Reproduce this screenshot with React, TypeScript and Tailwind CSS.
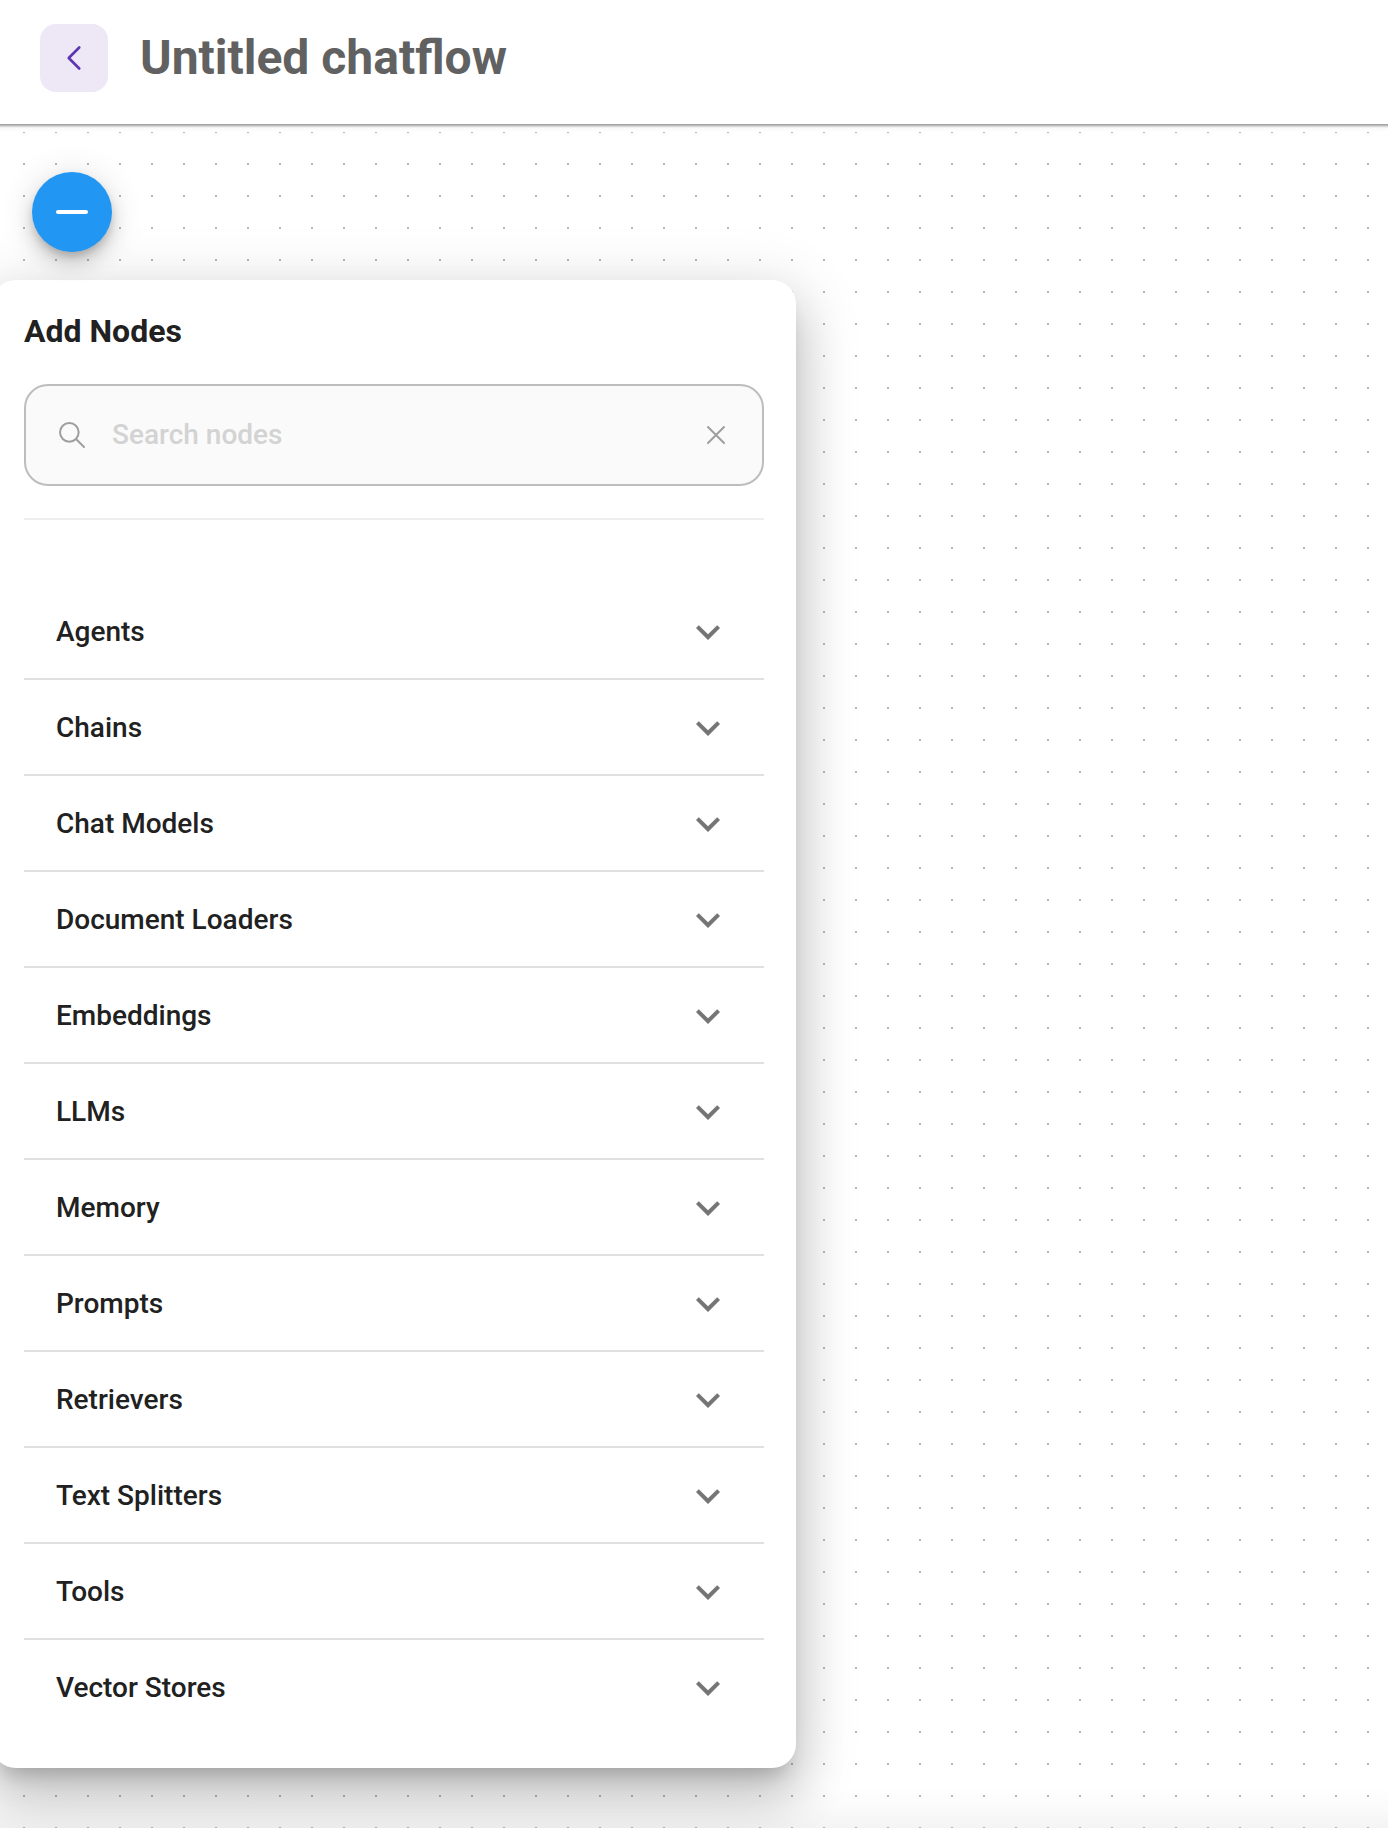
import React from "react";

const categories = [
  "Agents",
  "Chains",
  "Chat Models",
  "Document Loaders",
  "Embeddings",
  "LLMs",
  "Memory",
  "Prompts",
  "Retrievers",
  "Text Splitters",
  "Tools",
  "Vector Stores",
];

type IconProps = { className?: string; children: React.ReactNode };

function Icon({ className, children }: IconProps) {
  return (
    <svg
      viewBox="0 0 24 24"
      fill="none"
      stroke="currentColor"
      strokeWidth={1.5}
      strokeLinecap="round"
      strokeLinejoin="round"
      className={className}
    >
      {children}
    </svg>
  );
}

function Header() {
  return (
    <header className="relative z-10 -mx-4 flex h-[124px] items-start bg-white pt-6 pl-14 shadow-[0_4px_2px_-2px_rgba(0,0,0,0.2),0_2px_2px_0_rgba(0,0,0,0.14),0_2px_6px_0_rgba(0,0,0,0.12)]">
      <button className="flex size-[68px] items-center justify-center rounded-2xl bg-[#ede7f6] text-[#5e35b1]">
        <Icon className="size-[42px]">
          <path d="M15 6l-6 6l6 6" />
        </Icon>
      </button>
      <h1 className="ml-8 text-[48px] leading-[68px] font-bold text-[#616161]">Untitled chatflow</h1>
    </header>
  );
}

function SearchBox() {
  return (
    <div className="flex h-[102px] items-center rounded-3xl border-2 border-[#bdbdbd] bg-[#fafafa] px-[30px]">
      <Icon className="size-8 text-[#9e9e9e]">
        <circle cx="10" cy="10" r="7" />
        <path d="M21 21l-6-6" />
      </Icon>
      <span className="ml-6 flex-1 text-[28px] font-medium text-[#d3d3d3]">Search nodes</span>
      <Icon className="size-8 text-[#9e9e9e]">
        <path d="M18 6L6 18M6 6l12 12" />
      </Icon>
    </div>
  );
}

function NodePanel() {
  return (
    <section className="relative mt-7 -ml-2 h-[1488px] w-[804px] rounded-3xl bg-white px-8 pt-[31px] shadow-[0_16px_20px_-10px_rgba(0,0,0,0.2),0_32px_48px_4px_rgba(0,0,0,0.14),0_12px_60px_10px_rgba(0,0,0,0.12)]">
      <h2 className="text-[32px] leading-[40px] font-bold text-[#212121]">Add Nodes</h2>
      <div className="mt-[33px]">
        <SearchBox />
      </div>
      <div className="mt-8 h-0.5 bg-[#eeeeee]" />
      <ul className="mt-16">
        {categories.map((name) => (
          <li
            key={name}
            className="flex h-24 items-center justify-between border-b-2 border-[#e0e0e0] px-8 pt-0.5 last:border-b-0 last:pt-0"
          >
            <span className="text-[28px] leading-[42px] font-medium text-[#212121]">{name}</span>
            <svg viewBox="0 0 24 24" className="size-12 text-[#757575]" fill="currentColor">
              <path d="M7.41 8.59L12 13.17l4.59-4.58L18 10l-6 6-6-6 1.41-1.41z" />
            </svg>
          </li>
        ))}
      </ul>
    </section>
  );
}

export default function App() {
  return (
    <div className="flex h-[1828px] w-[1388px] flex-col overflow-hidden bg-white font-[Roboto,sans-serif]">
      <Header />
      <main className="relative mt-2 flex-1">
        {/* dotted canvas grid */}
        <svg className="absolute inset-0 size-full">
          <defs>
            <pattern id="dots" x="23" y="-1" width="32" height="32" patternUnits="userSpaceOnUse">
              <rect width="2" height="2" fill="#b8b8b8" />
            </pattern>
          </defs>
          <rect width="100%" height="100%" fill="url(#dots)" />
        </svg>
        {/* soft shade along the lower edge of the canvas */}
        <div className="absolute inset-x-0 bottom-0 h-11 bg-linear-to-b from-transparent via-black/[0.015] to-black/[0.045]" />
        <div className="flex flex-col pt-10">
          <button className="relative z-10 ml-8 flex size-20 items-center justify-center rounded-full bg-[#2196f3] shadow-[0_6px_10px_-2px_rgba(0,0,0,0.2),0_12px_20px_0_rgba(0,0,0,0.14),0_2px_36px_0_rgba(0,0,0,0.12)]">
            <span className="h-1 w-8 rounded-full bg-white" />
          </button>
          <NodePanel />
        </div>
      </main>
    </div>
  );
}
